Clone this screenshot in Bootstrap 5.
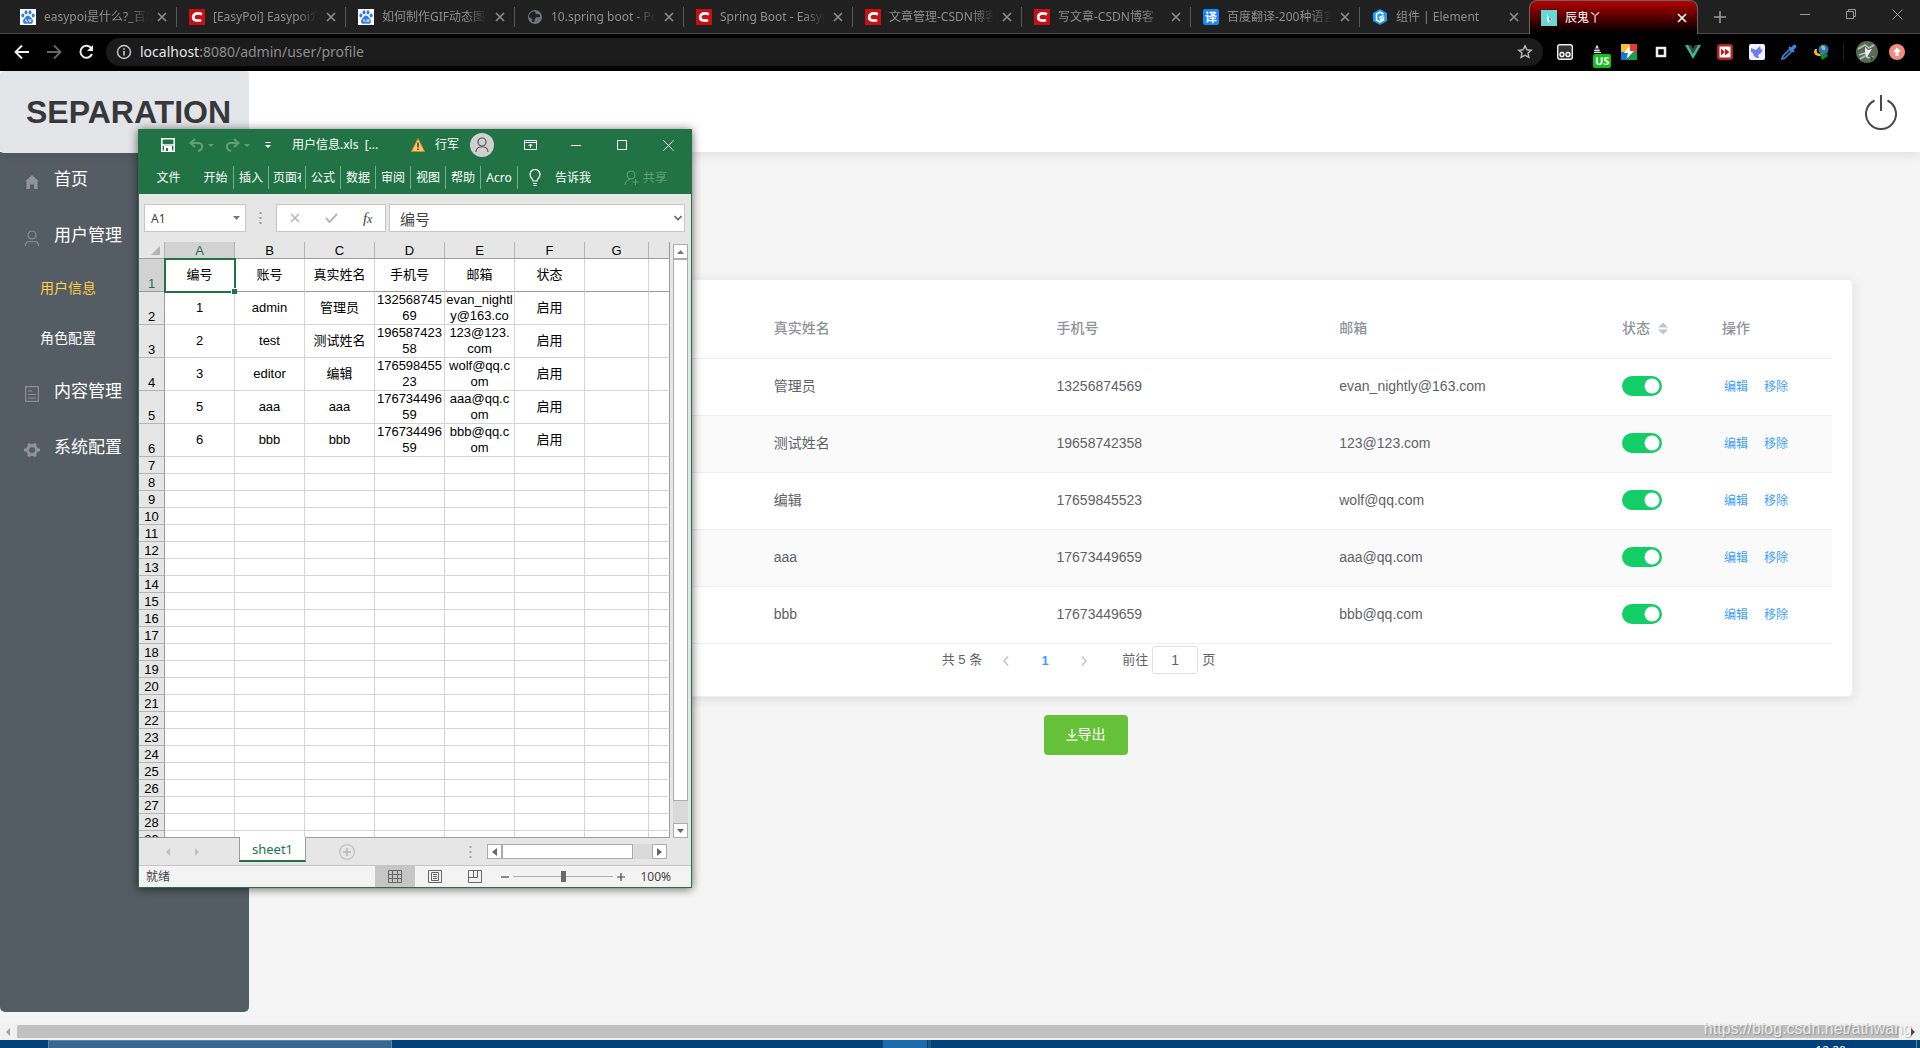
<!DOCTYPE html>
<html lang="zh-CN">
<head>
<meta charset="utf-8">
<meta name="viewport" content="width=device-width, initial-scale=1">
<title>辰鬼丫</title>
<link rel="stylesheet" href="https://cdn.jsdelivr.net/npm/bootstrap@5.3.0/dist/css/bootstrap.min.css">
<style>
:root{--ui:"Noto Sans","Noto Sans CJK SC",sans-serif;--page:"Liberation Sans","Noto Sans CJK SC",sans-serif;--xl:#217346}
body{font-family:var(--page);font-size:14px;background:#f5f5f5;overflow:hidden}
svg{display:block;flex:none}
button{background:none;border:0;padding:0;color:inherit}
/* browser chrome */
.tabstrip{height:34px;background:#202020;box-shadow:inset 0 -1px #4a4a4a;padding-left:8px;font:12px/18px var(--ui);color:#8e8e8e}
.btab{width:169px;height:34px;padding:0 10px 0 12px;gap:8px;position:relative}
.btab::after{content:"";position:absolute;right:0;top:7px;height:20px;border-right:1px solid #575757}
.btab.on{color:#fff;background:linear-gradient(#b40000,#000 95%);border:1px solid #666;border-bottom:0;border-radius:8px 8px 0 0;padding:0 10px 0 11px}
.btab.on::after,.btab.last::after{display:none}
.btab .ttl{flex:1;min-width:0;white-space:nowrap;overflow:hidden;-webkit-mask-image:linear-gradient(90deg,#000 80%,transparent);mask-image:linear-gradient(90deg,#000 80%,transparent)}
.btab.on .ttl{-webkit-mask-image:none;mask-image:none}
.winbtn{width:46px;height:28px}
.toolbar{height:37px;background:#000;padding:0 12px 2px 12px;color:#ddd}
.omni{height:28px;background:#1b1b1b;border-radius:14px;padding:0 10px;margin:0 14px 0 12px}
.url{font:14px/20px var(--ui);color:#8e8e8e}
.url b{font-weight:400;color:#e6e6e6}
.ext{gap:16px}
.usbadge{position:absolute;left:4px;top:10px;background:#12c21a;color:#fff;font:bold 11px/14px var(--ui);padding:0 2px;border-radius:2px}
/* admin page */
.top{height:81px;background:#fff;box-shadow:0 2px 12px rgba(0,0,0,.1);position:relative;z-index:2}
.brandbox{width:249px;height:82px;background:#e4e5e8;border-radius:4px;color:#37383c;font-size:32px;font-weight:700;line-height:82px;padding-left:26px;text-decoration:none}
.side{width:249px;background:#545c64;border-radius:0 0 5px 5px;margin-bottom:11px}
.side a{display:flex;align-items:center;text-decoration:none;color:#fff;height:56px;padding-left:24px;gap:14px;font-size:17px;line-height:24px}
.side a svg{margin-top:4px}
.side a.sub{height:50px;padding:0 0 2px 40px;font-size:14px}
.side a.cur{color:#ffd04b}
.work{padding:127px 67px 0 69px}
.panel{background:#fff;border:1px solid #ebeef5;border-radius:4px;box-shadow:0 2px 12px rgba(0,0,0,.1);padding:20px}
.users{table-layout:fixed;width:100%;color:#606266;line-height:23px}
.users th,.users td{border-bottom:1px solid #ebeef5;padding:0 10px;height:57px;vertical-align:middle}
.users th{height:58px;color:#909399;font-weight:500}
.users tbody tr:nth-child(even) td{background:#fafafa}
.users a{color:#409eff;font-size:12px;text-decoration:none;margin:0 16px 0 2px}
.users a+a{margin:0}
.users .form-check-input{width:40px;height:20px;margin:0;float:none;display:block;border:0;background-color:#13ce66;box-shadow:none;background-size:20px 20px}
.users .form-switch{padding:0;min-height:0}
.pager{height:32px;padding:2px 14px 0 0;gap:10px;font-size:13px;line-height:28px;color:#606266}
.pager .goto{gap:4px;margin-left:14px}
.pager input{width:46px;height:28px;border:1px solid #dcdfe6;border-radius:3px;text-align:center;color:#606266;font-size:14px;background:#fff}
.exp{width:84px;height:40px;margin-top:18px;border-radius:4px;background:#67c23a;color:#fff;font-size:14px}
/* scrollbar + taskbar */
.hbar{height:17px;background:#f1f1f1;padding:0 5px}
.hbar i{background:#c1c1c1;height:13px;margin:0 12px 0 6px}
.wmark{position:absolute;right:8px;bottom:8px;font-size:16px;line-height:22px;color:rgba(255,255,255,.75);text-shadow:1px 1px 1px rgba(0,0,0,.25)}
.taskbar{height:8px;background:#004279;padding-left:48px;overflow:hidden}
.task1{width:344px;background:#38688f;border:1px solid #5c86a8;border-bottom:0}
.task2{width:44px;background:#1a6bac;margin-left:491px}
.task3{width:3px;background:#16568a;margin-left:1px}
.clock{color:#fff;font:12px/16px var(--ui);margin:3px 70px 0 auto}
.peek{border-left:1px solid #5c86a8;width:4px}
/* spreadsheet window */
.xl{position:absolute;left:138px;top:129px;width:554px;height:759px;z-index:5;border:1px solid var(--xl);border-top:0;background:#e6e6e6;box-shadow:0 1px 9px rgba(0,0,0,.6);font:12px/18px var(--ui);color:#444}
.xlhead{background:var(--xl);color:#fff;height:65px}
.xltitle{height:32px;padding-left:22px}
.xlwin{width:46px}
.xlribbon{height:33px}
.xlribbon button{height:23px;border-right:1px solid #7aab8f;width:35px;white-space:nowrap;overflow:hidden;flex:none;padding:0}
.xlribbon button.plain{border:0}
.faded{opacity:.3}
.fbar{padding:10px 6px 0 5px;height:37px}
.fbox{background:#fff;border:1px solid #c6c6c6;height:28px}
.fbox input{border:0;background:none;outline:0;width:100%;height:26px;color:#444}
.gridwrap{margin-top:11px;height:596px;overflow:hidden;padding-right:3px}
.gridbox{flex:1;min-width:0;overflow:hidden;border-bottom:1px solid #9b9b9b}
.cells{table-layout:fixed;width:531px;border-collapse:separate;border-spacing:0;font:13px/16px var(--page);color:#000;text-align:center;background:#fff}
.cells th{background:#e6e6e6;font-weight:400;border-right:1px solid #9b9b9b;border-bottom:1px solid #b4b4b4;padding:0}
.cells thead th{height:17px;border-bottom:1px solid #9b9b9b;border-right-color:#b4b4b4;line-height:15px}
.cells tbody th{height:17px;vertical-align:bottom;line-height:14px}
.cells td{border-right:1px solid #d4d4d4;border-bottom:1px solid #d4d4d4;padding:0;vertical-align:middle}
.cells tr.tall>*{height:33px}
.cells tr.frz>*{border-bottom-color:#9b9b9b}
.cells tr>*:last-child{border-right-color:#9b9b9b}
.cells thead th.hot,.cells th.hot{background:#d2d2d2;color:var(--xl)}
.cells td.pick{outline:2px solid var(--xl);outline-offset:-1px;position:relative}
.cells td.pick::after{content:"";position:absolute;right:-3px;bottom:-3px;width:5px;height:5px;background:var(--xl);border:1px solid #fff;box-sizing:content-box;border-right:0;border-bottom:0}
.vbar{width:15px;background:#dadada;margin:2px 0 0 3px}
.sbtn{width:15px;height:15px;background:#fff;border:1px solid #ababab;display:flex;align-items:center;justify-content:center;flex:none}
.thumb{background:#fff;border:1px solid #ababab}
.sheets{height:28px;border-bottom:1px solid #c6c6c6}
.sheettab{width:67px;height:25px;margin-top:-1px;background:#fff;border:1px solid #9b9b9b;border-top:0;border-bottom:2px solid var(--xl);color:var(--xl);font-size:13px;align-self:flex-start}
.hscroll{width:180px;background:#dadada;height:15px}
.status{height:21px;background:#f3f3f3}
.vw{width:40px;height:21px;display:flex;align-items:center;justify-content:center}
.vw.on{background:#c6c6c6}
.fx{font:italic 15px/20px "Liberation Serif",serif}
.fx span{font-size:12px}
.zoomr{appearance:none;-webkit-appearance:none;width:100px;height:12px;background:linear-gradient(#b0b0b0,#b0b0b0) center/100% 1px no-repeat;margin:0 4px}
.zoomr::-webkit-slider-thumb{-webkit-appearance:none;width:5px;height:11px;background:#6a6a6a;border:0}
</style>
</head>
<body class="d-flex flex-column vh-100 position-relative">
<svg width="0" height="0" class="position-absolute" aria-hidden="true">
<symbol id="x" viewBox="0 0 10 10"><path d="M1 1l8 8M9 1l-8 8" stroke="currentColor" stroke-width="1.6" fill="none"/></symbol>
<symbol id="paw" viewBox="0 0 16 16"><path fill="#fff" d="M0 0h16v16H0z"/><g fill="#2f7bea"><ellipse cx="6" cy="3.4" rx="1.5" ry="2.1"/><ellipse cx="10" cy="3.4" rx="1.5" ry="2.1"/><ellipse cx="2.8" cy="6.6" rx="1.5" ry="2"/><ellipse cx="13.2" cy="6.6" rx="1.5" ry="2"/><path d="M8 6.5c-1.800 0-2.300 1.500-3.500 2.700-2.400 2.300-1.700 5.600.9 5.600 1 0 1.600-.3 2.600-.3s1.600.3 2.600.3c2.600 0 3.300-3.300.9-5.600C10.300 8 9.800 6.500 8 6.500z"/></g><path d="M6 10v2.500h1.500M9 10v2.500h1.800V10" stroke="#fff" fill="none" stroke-width=".9"/></symbol>
<symbol id="cs" viewBox="0 0 16 16"><path fill="#c90f14" d="M0 0h16v16H0z"/><path d="M13 5.200C8.500 3.500 4.500 4.500 4.200 8c-.2 3.500 3.600 4.200 8 3.200" fill="none" stroke="#fff" stroke-width="2.700"/></symbol>
</svg>

<nav class="tabstrip d-flex flex-shrink-0">
 <div class="btab d-flex align-items-center"><svg width="16" height="16"><use href="#paw"/></svg><span class="ttl">easypoi是什么?_百度</span><button aria-label="关闭"><svg width="10" height="10"><use href="#x"/></svg></button></div>
 <div class="btab d-flex align-items-center"><svg width="16" height="16"><use href="#cs"/></svg><span class="ttl">[EasyPoi] Easypoi介绍</span><button aria-label="关闭"><svg width="10" height="10"><use href="#x"/></svg></button></div>
 <div class="btab d-flex align-items-center"><svg width="16" height="16"><use href="#paw"/></svg><span class="ttl">如何制作GIF动态图片</span><button aria-label="关闭"><svg width="10" height="10"><use href="#x"/></svg></button></div>
 <div class="btab d-flex align-items-center"><svg width="16" height="16" viewBox="0 0 16 16"><circle cx="8" cy="8" r="7" fill="#70757a"/><path d="M7 2.500c2 0 1 2 2.500 2.500s3-.5 3.500 1.500-1.500 2-3 1.800C8 8.200 9 10 7.500 10.500 9 12 6 14 5 12.500 6 10 4 9 2 8c0-3 2-5.500 5-5.500z" fill="#202020"/></svg><span class="ttl">10.spring boot - Poi</span><button aria-label="关闭"><svg width="10" height="10"><use href="#x"/></svg></button></div>
 <div class="btab d-flex align-items-center"><svg width="16" height="16"><use href="#cs"/></svg><span class="ttl">Spring Boot - Easypoi</span><button aria-label="关闭"><svg width="10" height="10"><use href="#x"/></svg></button></div>
 <div class="btab d-flex align-items-center"><svg width="16" height="16"><use href="#cs"/></svg><span class="ttl">文章管理-CSDN博客</span><button aria-label="关闭"><svg width="10" height="10"><use href="#x"/></svg></button></div>
 <div class="btab d-flex align-items-center"><svg width="16" height="16"><use href="#cs"/></svg><span class="ttl">写文章-CSDN博客</span><button aria-label="关闭"><svg width="10" height="10"><use href="#x"/></svg></button></div>
 <div class="btab d-flex align-items-center"><svg width="16" height="16" viewBox="0 0 16 16"><rect width="16" height="16" rx="2" fill="#1b86f9"/><text x="2" y="12.500" font-size="12" font-weight="700" fill="#fff">译</text></svg><span class="ttl">百度翻译-200种语言</span><button aria-label="关闭"><svg width="10" height="10"><use href="#x"/></svg></button></div>
 <div class="btab last d-flex align-items-center"><svg width="16" height="16" viewBox="0 0 16 16"><path d="M8 0l7 4v8l-7 4-7-4V4z" fill="#1b9bf5"/><path d="M11.500 5L8 3 4.500 5v6L8 13l3.500-2V9L8 11M11.500 6.500L7 9" stroke="#fff" stroke-width="1.500" fill="none"/></svg><span class="ttl">组件 | Element</span><button aria-label="关闭"><svg width="10" height="10"><use href="#x"/></svg></button></div>
 <div class="btab on d-flex align-items-center"><svg width="16" height="16" viewBox="0 0 16 16"><path fill="#66d9d4" d="M0 0h16v16H0z"/><path d="M6 4l2 4 3 1-3 4-2-2z" fill="#e8f4f4"/><path d="M8 8l2 1-1 2z" fill="#333"/></svg><span class="ttl">辰鬼丫</span><button aria-label="关闭"><svg width="10" height="10"><use href="#x"/></svg></button></div>
 <button class="px-3" aria-label="新标签页"><svg width="12" height="12" viewBox="0 0 12 12"><path d="M6 0v12M0 6h12" stroke="#999" stroke-width="1.600"/></svg></button>
 <div class="d-flex ms-auto">
  <button class="winbtn d-flex align-items-center justify-content-center" aria-label="最小化"><svg width="10" height="10"><path d="M0 5.500h10" stroke="#999"/></svg></button>
  <button class="winbtn d-flex align-items-center justify-content-center" aria-label="还原"><svg width="10" height="10"><path d="M.5 2.500h7v7h-7zM2.500 2V.5h7v7H8" stroke="#999" fill="none"/></svg></button>
  <button class="winbtn d-flex align-items-center justify-content-center" aria-label="关闭窗口"><svg width="11" height="11"><path d="M.5.5l10 10M10.500.5l-10 10" stroke="#999"/></svg></button>
 </div>
</nav>

<div class="toolbar d-flex align-items-center flex-shrink-0">
 <div class="d-flex gap-3">
  <button aria-label="后退"><svg width="18" height="20" viewBox="0 0 18 20"><path d="M17 10H4M10 3.500L3.500 10l6.500 6.500" fill="none" stroke="#eee" stroke-width="1.900"/></svg></button>
  <button aria-label="前进"><svg width="16" height="20" viewBox="0 0 16 20"><path d="M1 10h13M8 3.500l6.500 6.500L8 16.500" fill="none" stroke="#666" stroke-width="1.900"/></svg></button>
  <button aria-label="刷新"><svg width="16" height="20" viewBox="0 0 16 20"><path d="M13.500 6.500A6 6 0 1 0 14 12" fill="none" stroke="#eee" stroke-width="2"/><path d="M15 3v6H9z" fill="#eee"/></svg></button>
 </div>
 <div class="omni d-flex align-items-center flex-fill">
  <svg width="16" height="16" viewBox="0 0 16 16"><circle cx="8" cy="8" r="6.500" fill="none" stroke="#ccc" stroke-width="1.400"/><path d="M8 7v4.500M8 4.300v1.500" stroke="#ccc" stroke-width="1.600"/></svg>
  <a class="url text-decoration-none ms-2 me-auto" href="#"><b>localhost</b>:8080/admin/user/profile</a>
  <button aria-label="收藏"><svg width="16" height="16" viewBox="0 0 16 16"><path d="M8 1.800l1.900 4 4.300.4-3.200 2.900.9 4.300L8 11.200l-3.900 2.200.9-4.300L1.800 6.200l4.300-.4z" fill="none" stroke="#bbb" stroke-width="1.400"/></svg></button>
 </div>
 <div class="ext d-flex align-items-center">
  <svg width="16" height="16" viewBox="0 0 16 16"><rect x=".7" y=".7" width="14.600" height="14.600" rx="2" fill="#333" stroke="#eee" stroke-width="1.400"/><circle cx="5" cy="10.500" r="2" fill="none" stroke="#fff" stroke-width="1.300"/><circle cx="11" cy="10.500" r="2" fill="none" stroke="#fff" stroke-width="1.300"/></svg>
  <div class="position-relative"><svg width="16" height="16" viewBox="0 0 16 16"><path d="M8 1.500L5.500 7h5zM5 8.500h7" fill="#ddd" stroke="#ddd"/><path d="M6 5h4" stroke="#000"/></svg><span class="usbadge">US</span></div>
  <svg width="16" height="16" viewBox="0 0 16 16"><path fill="#fbc02d" d="M0 0h9L7 8H0z"/><path fill="#e53935" d="M9 0h7v8H7z"/><path fill="#1976d2" d="M0 8h8l-2 8H0z"/><path fill="#1b9e4b" d="M8 8h8v8H6z"/><path d="M9 1L3 9h4l-1.500 6L13 7H9z" fill="#fff"/></svg>
  <svg width="16" height="16" viewBox="0 0 16 16"><path d="M4 4h8v8H4z" fill="none" stroke="#eee" stroke-width="2.500"/></svg>
  <svg width="16" height="16" viewBox="0 0 16 16"><path d="M0 1h3.200L8 9.500 12.800 1H16L8 15z" fill="#41b883"/><path d="M3.200 1H6l2 3.500L10 1h2.800L8 9.500z" fill="#35495e"/></svg>
  <svg width="16" height="16" viewBox="0 0 16 16"><rect width="16" height="16" rx="3" fill="#b3211c"/><rect x="2.500" y="2.500" width="11" height="11" fill="#fff"/><path d="M4 4.500L8 8l-4 3.500zM8 4.500L12.500 8 8 11.500z" fill="#b3211c"/></svg>
  <svg width="16" height="16" viewBox="0 0 16 16"><rect width="16" height="16" rx="2" fill="#f3f0ff"/><path d="M2 4l5 2 4-4 1 4 2-1-2 4-3 2 1 3C7 14 4 12 4 9L2 8z" fill="#6b7cf5"/></svg>
  <svg width="16" height="16" viewBox="0 0 16 16"><path d="M9.500 4.500L2 12l-1 3 3-1 7.500-7.500" fill="none" stroke="#3f86dc" stroke-width="1.600"/><path d="M8 3l5 5" stroke="#3f86dc" stroke-width="2"/><path d="M10.500 5.500l3-3" stroke="#3f86dc" stroke-width="3.600" stroke-linecap="round"/></svg>
  <svg width="16" height="16" viewBox="0 0 16 16"><circle cx="10.500" cy="5.500" r="5" fill="#2f6fd0"/><path d="M8 2c3-1 5 1 4 4-2 1-3 0-4-4z" fill="#9bd24f"/><path d="M2 5c-3 4 1 8 7 7l1-3C6 11 3 9 4 5z" fill="#f3b51b"/><path d="M7 10l6-1 2 3-6 4z" fill="#118c2b"/></svg>
 </div>
 <div class="vr align-self-center" style="height:18px;margin:0 12px 0 14px;color:#888"></div>
 <svg width="22" height="22" viewBox="0 0 22 22"><circle cx="11" cy="11" r="11" fill="#556b53"/><path d="M2 8l7-4 4 3 5-3M3 14l6-2 3 5 6-1M4 18l5-3" stroke="#b9c4b4" stroke-width="1.500" fill="none"/><path d="M9 6l3 3 4-1-3 5-3 4-1-6z" fill="#e6ecf2"/><path d="M14 15l4 2-3 3z" fill="#2f4a35"/></svg>
 <svg class="ms-2" width="22" height="16" viewBox="-3 0 22 16"><circle cx="8" cy="8" r="8" fill="#f28b82"/><path d="M8 3.500l4 4.500H9.500v4h-3V8H4z" fill="#fff"/></svg>
</div>

<header class="top d-flex flex-shrink-0">
 <a class="brandbox" href="#">SEPARATION</a>
 <button class="ms-auto d-flex align-items-center" style="margin-right:23px" aria-label="退出"><svg width="32" height="38" viewBox="0 0 32 38"><path d="M9.500 7.500a15 15 0 1 0 13 0M16 2v16" fill="none" stroke="#4a4a4a" stroke-width="2"/></svg></button>
</header>

<div class="d-flex flex-fill" style="min-height:0">
 <nav class="side flex-shrink-0">
  <a href="#"><svg width="16" height="16" viewBox="0 0 16 16"><path d="M8 1L1 7.500h1.500V15H6v-4.500h4V15h3.500V7.500H15z" fill="#909399"/></svg>首页</a>
  <a href="#"><svg width="16" height="16" viewBox="0 0 16 16"><circle cx="8" cy="5" r="4" fill="none" stroke="#8b8f96" stroke-width="1.200"/><path d="M1.500 16c0-3 1.500-4.500 3.500-4.500h6c2 0 3.500 1.500 3.500 4.500" fill="none" stroke="#8b8f96" stroke-width="1.200"/></svg>用户管理</a>
  <a href="#" class="sub cur">用户信息</a>
  <a href="#" class="sub">角色配置</a>
  <a href="#"><svg width="16" height="16" viewBox="0 0 16 16"><path d="M1.600.6h12.800v14.800H1.600zM4 5h4M4 8.500h8M4 12h8" fill="none" stroke="#8b8f96" stroke-width="1.200"/></svg>内容管理</a>
  <a href="#"><svg width="16" height="16" viewBox="0 0 16 16"><circle cx="8" cy="8" r="4.500" fill="none" stroke="#909399" stroke-width="3"/><path d="M4.500 1.500l1.500 2.500M10 12l1.500 2.500M11.500 1.500L10 4M6 12l-1.500 2.500M0 8h3M13 8h3" stroke="#909399" stroke-width="3"/></svg>系统配置</a>
 </nav>
 <main class="work flex-fill">
  <section class="panel">
   <table class="users">
    <colgroup><col style="width:142px"><col><col><col><col><col style="width:100px"><col style="width:120px"></colgroup>
    <thead><tr><th></th><th></th><th>真实姓名</th><th>手机号</th><th>邮箱</th><th><span class="d-flex align-items-center gap-2">状态<svg width="10" height="13" viewBox="0 0 10 13"><path d="M0 5.500L5 .5l5 5zM0 7.500h10l-5 5z" fill="#c0c4cc"/></svg></span></th><th>操作</th></tr></thead>
    <tbody>
     <tr><td></td><td></td><td>管理员</td><td>13256874569</td><td>evan_nightly@163.com</td><td><div class="form-check form-switch"><input class="form-check-input" type="checkbox" role="switch" aria-label="状态" checked></div></td><td><a href="#">编辑</a><a href="#">移除</a></td></tr>
     <tr><td></td><td></td><td>测试姓名</td><td>19658742358</td><td>123@123.com</td><td><div class="form-check form-switch"><input class="form-check-input" type="checkbox" role="switch" aria-label="状态" checked></div></td><td><a href="#">编辑</a><a href="#">移除</a></td></tr>
     <tr><td></td><td></td><td>编辑</td><td>17659845523</td><td>wolf@qq.com</td><td><div class="form-check form-switch"><input class="form-check-input" type="checkbox" role="switch" aria-label="状态" checked></div></td><td><a href="#">编辑</a><a href="#">移除</a></td></tr>
     <tr><td></td><td></td><td>aaa</td><td>17673449659</td><td>aaa@qq.com</td><td><div class="form-check form-switch"><input class="form-check-input" type="checkbox" role="switch" aria-label="状态" checked></div></td><td><a href="#">编辑</a><a href="#">移除</a></td></tr>
     <tr><td></td><td></td><td>bbb</td><td>17673449659</td><td>bbb@qq.com</td><td><div class="form-check form-switch"><input class="form-check-input" type="checkbox" role="switch" aria-label="状态" checked></div></td><td><a href="#">编辑</a><a href="#">移除</a></td></tr>
    </tbody>
   </table>
   <div class="pager d-flex justify-content-center">
    <span>共 5 条</span>
    <button class="px-2" aria-label="上一页"><svg width="12" height="12" viewBox="0 0 12 12"><path d="M8 1.500L4 6l4 4.500" fill="none" stroke="#c0c4cc" stroke-width="1.500"/></svg></button>
    <button class="px-2" style="color:#409eff;width:30px"><b>1</b></button>
    <button class="px-2" aria-label="下一页"><svg width="12" height="12" viewBox="0 0 12 12"><path d="M4 1.500L8 6l-4 4.500" fill="none" stroke="#c0c4cc" stroke-width="1.500"/></svg></button>
    <div class="goto d-flex"><label for="pg">前往</label><input id="pg" value="1"><span>页</span></div>
   </div>
  </section>
  <div class="text-center"><button class="exp"><span class="d-flex align-items-center justify-content-center"><svg width="12" height="12" viewBox="0 0 12 12"><path d="M6 0v8M2.500 5L6 8.500 9.500 5M.5 11.200h11" fill="none" stroke="#fff" stroke-width="1.200"/></svg>导出</span></button></div>
 </main>
</div>

<div class="hbar d-flex align-items-center flex-shrink-0">
 <svg width="6" height="8"><path d="M5 0v8L1 4z" fill="#a3a3a3"/></svg><i class="flex-fill"></i><svg width="4" height="8"><path d="M0 0v8l4-4z" fill="#505050"/></svg>
</div>
<div class="taskbar d-flex flex-shrink-0"><span class="task1"></span><span class="task2"></span><span class="task3"></span><span class="clock">12:20</span><span class="peek"></span></div>
<div class="wmark">https://blog.csdn.net/athwang</div>

<section class="xl">
 <div class="xlhead">
  <div class="xltitle d-flex align-items-center">
   <button aria-label="保存"><svg width="14" height="14"><path d="M.8.8h12.400v12.400H.8zM1 7h12" fill="none" stroke="#fff" stroke-width="1.600"/><path d="M3 8h8v5H3z" fill="#fff"/><path d="M5 10h2v3H5z" fill="#217346"/></svg></button>
   <button class="faded d-flex align-items-center gap-1" style="margin-left:14px" aria-label="撤消"><svg width="15" height="14"><path d="M6 1L1.500 5 6 9M2 5h7c6 0 5 7 0 8" fill="none" stroke="#fff" stroke-width="2"/></svg><svg width="6" height="3"><path d="M0 0h6L3 3z" fill="#fff"/></svg></button>
   <button class="faded d-flex align-items-center gap-1" style="margin-left:11px" aria-label="恢复"><svg width="15" height="14"><path d="M9 1l4.500 4L9 9M13 5H6C0 5 1 12 6 13" fill="none" stroke="#fff" stroke-width="2"/></svg><svg width="6" height="3"><path d="M0 0h6L3 3z" fill="#fff"/></svg></button>
   <button style="margin-left:15px" aria-label="自定义"><svg width="6" height="7"><path d="M0 .5h6" stroke="#fff"/><path d="M0 3h6L3 6z" fill="#fff"/></svg></button>
   <span style="margin-left:21px;width:119px">用户信息.xls&nbsp; [...</span>
   <svg width="14" height="14" viewBox="0 0 14 14"><path d="M7 .5L13.500 13.500H.5z" fill="#f7c667" stroke="#d9822b"/><path d="M7 4.500v5M7 10.500v1.500" stroke="#333" stroke-width="1.400"/></svg>
   <span style="margin:0 11px 0 10px">行军</span>
   <svg width="24" height="24" viewBox="0 0 24 24"><circle cx="12" cy="12" r="12" fill="#d0d0d0"/><circle cx="12" cy="9" r="4" fill="none" stroke="#555" stroke-width="1.200"/><path d="M6 19c0-7 12-7 12 0" fill="none" stroke="#555" stroke-width="1.200"/></svg>
   <div class="d-flex ms-auto">
    <button class="xlwin d-flex justify-content-center" aria-label="功能区"><svg width="13" height="10"><path d="M.5.5h12v9H.5zM.5 2.500h12M6.500 8V4M4.500 6l2-2 2 2" fill="none" stroke="#fff"/></svg></button>
    <button class="xlwin d-flex justify-content-center" aria-label="最小化"><svg width="10" height="10"><path d="M0 5.500h10" stroke="#fff"/></svg></button>
    <button class="xlwin d-flex justify-content-center" aria-label="最大化"><svg width="10" height="10"><path d="M.5.5h9v9h-9z" fill="none" stroke="#fff"/></svg></button>
    <button class="xlwin d-flex justify-content-center" aria-label="关闭"><svg width="11" height="11"><path d="M.5.5l10 10M10.500.5l-10 10" stroke="#fff"/></svg></button>
   </div>
  </div>
  <div class="xlribbon d-flex align-items-center">
   <button class="plain" style="width:59px">文件</button>
   <button style="width:36px">开始</button><button>插入</button><button style="width:37px"><span class="d-block overflow-hidden text-start mx-1">页面布局</span></button><button>公式</button><button>数据</button><button>审阅</button><button>视图</button><button>帮助</button><button style="width:37px">Acro</button>
   <svg style="margin-left:11px" width="12" height="18" viewBox="0 0 12 18"><path d="M4 12c0-2-3-3-3-6.500a5 5 0 0 1 10 0C11 9 8 10 8 12zM4 14.500h4M4.500 16.500h3" fill="none" stroke="#fff" stroke-width="1.200"/></svg>
   <button class="plain" style="width:64px">告诉我</button>
   <button class="plain faded d-flex align-items-center gap-1 ms-auto" style="width:auto;margin-right:24px"><svg width="15" height="16"><circle cx="7" cy="5" r="4" fill="none" stroke="#fff"/><path d="M1 15c0-3 2-5.500 5-5.500M11.500 9v6M8.500 12h6" fill="none" stroke="#fff"/></svg>共享</button>
  </div>
 </div>
 <div class="fbar d-flex">
  <div class="fbox d-flex align-items-center pe-1 ps-1" style="width:102px"><input aria-label="名称框" value="A1"><svg width="8" height="5"><path d="M0 0h7L3.500 4z" fill="#777"/></svg></div>
  <svg style="margin:8px 14px 0 13px" width="3" height="12"><path d="M1.500 0v2M1.500 5v2M1.500 10v2" stroke="#999" stroke-width="2"/></svg>
  <div class="fbox d-flex align-items-center justify-content-around" style="width:110px"><svg width="10" height="10"><path d="M1 1l8 8M9 1l-8 8" stroke="#b8b8b8" stroke-width="1.600"/></svg><svg width="13" height="10"><path d="M1 5l3.500 4L12 1" fill="none" stroke="#b8b8b8" stroke-width="2"/></svg><i class="fx">f<span>x</span></i></div>
  <div class="fbox d-flex align-items-center flex-fill" style="margin-left:3px;padding:0 2px 0 8px"><input aria-label="编辑栏" value="编号" style="font-size:15px"><svg width="8" height="6"><path d="M.5 1L4 4.500 7.500 1" fill="none" stroke="#666" stroke-width="1.600"/></svg></div>
 </div>
 <div class="gridwrap d-flex">
  <div class="gridbox">
   <table class="cells">
    <colgroup><col style="width:26px"><col style="width:70px"><col style="width:70px"><col style="width:70px"><col style="width:70px"><col style="width:70px"><col style="width:70px"><col style="width:64px"><col style="width:21px"></colgroup>
    <thead><tr><th><svg class="ms-auto me-1" width="9" height="9"><path d="M9 0v9H0z" fill="#b4b4b4"/></svg></th><th class="hot">A</th><th>B</th><th>C</th><th>D</th><th>E</th><th>F</th><th>G</th><th></th></tr></thead>
    <tbody id="rows">
     <tr class="tall frz"><th class="hot">1</th><td class="pick">编号</td><td>账号</td><td>真实姓名</td><td>手机号</td><td>邮箱</td><td>状态</td><td></td><td></td></tr>
     <tr class="tall"><th>2</th><td>1</td><td>admin</td><td>管理员</td><td>132568745<br>69</td><td>evan_nightl<br>y@163.co</td><td>启用</td><td></td><td></td></tr>
     <tr class="tall"><th>3</th><td>2</td><td>test</td><td>测试姓名</td><td>196587423<br>58</td><td>123@123.<br>com</td><td>启用</td><td></td><td></td></tr>
     <tr class="tall"><th>4</th><td>3</td><td>editor</td><td>编辑</td><td>176598455<br>23</td><td>wolf@qq.c<br>om</td><td>启用</td><td></td><td></td></tr>
     <tr class="tall"><th>5</th><td>5</td><td>aaa</td><td>aaa</td><td>176734496<br>59</td><td>aaa@qq.c<br>om</td><td>启用</td><td></td><td></td></tr>
     <tr class="tall"><th>6</th><td>6</td><td>bbb</td><td>bbb</td><td>176734496<br>59</td><td>bbb@qq.c<br>om</td><td>启用</td><td></td><td></td></tr>
    </tbody>
   </table>
  </div>
  <div class="vbar d-flex flex-column"><button class="sbtn" aria-label="向上"><svg width="7" height="4"><path d="M0 4h7L3.500 0z" fill="#777"/></svg></button><div class="thumb flex-fill" style="margin-bottom:22px"></div><button class="sbtn" aria-label="向下"><svg width="7" height="4"><path d="M0 0h7L3.500 4z" fill="#666"/></svg></button></div>
 </div>
 <div class="sheets d-flex align-items-center">
  <svg style="margin-left:27px" width="5" height="8"><path d="M4 0v8L0 4z" fill="#c0c0c0"/></svg>
  <svg style="margin-left:24px" width="5" height="8"><path d="M0 0v8l4-4z" fill="#c0c0c0"/></svg>
  <button class="sheettab" style="margin-left:39px">sheet1</button>
  <button style="margin-left:33px" aria-label="新工作表"><svg width="16" height="16"><circle cx="8" cy="8" r="7.400" fill="none" stroke="#c0c0c0" stroke-width="1.200"/><path d="M8 4v8M4 8h8" stroke="#c0c0c0" stroke-width="2"/></svg></button>
  <svg class="ms-auto" style="margin-right:15px" width="3" height="12"><path d="M1.500 0v2M1.500 5v2M1.500 10v2" stroke="#aaa" stroke-width="2"/></svg>
  <div class="hscroll d-flex" style="margin-right:24px"><button class="sbtn" aria-label="向左"><svg width="5" height="8"><path d="M5 0v8L0 4z" fill="#666"/></svg></button><div class="thumb flex-fill" style="margin-right:19px"></div><button class="sbtn" aria-label="向右"><svg width="5" height="8"><path d="M0 0v8l5-4z" fill="#666"/></svg></button></div>
 </div>
 <div class="status d-flex align-items-center">
  <span class="me-auto" style="margin-left:7px">就绪</span>
  <button class="vw on" aria-label="普通"><svg width="14" height="13"><path d="M.5.5h13v12H.5zM.5 4.500h13M.5 8.500h13M4.500.5v12M9.500.5v12" fill="none" stroke="#666"/></svg></button>
  <button class="vw" aria-label="页面布局"><svg width="14" height="13"><path d="M.5.5h13v12H.5zM3.500 2.500h7v8h-7zM5 4.500h4M5 6.500h4M5 8.500h4" fill="none" stroke="#666"/></svg></button>
  <button class="vw" aria-label="分页预览"><svg width="14" height="13"><path d="M.5.5h13v12H.5zM.5 7.500h9v-7M5.500.5v7" fill="none" stroke="#666"/></svg></button>
  <svg width="8" height="8" style="margin-left:6px"><path d="M0 4h8" stroke="#444" stroke-width="1.200"/></svg>
  <input class="zoomr" type="range" min="0" max="100" value="50" aria-label="缩放">
  <svg width="8" height="8"><path d="M0 4h8M4 0v8" stroke="#444" stroke-width="1.200"/></svg>
  <span style="margin:0 20px 0 15px">100%</span>
 </div>
</section>

<script>
// blank rows below the exported data
const rows = document.getElementById('rows');
for (let n = 7; n <= 29; n++) {
  rows.insertAdjacentHTML('beforeend', '<tr><th>' + n + '</th>' + '<td></td>'.repeat(8) + '</tr>');
}
</script>
<script src="https://cdn.jsdelivr.net/npm/bootstrap@5.3.0/dist/js/bootstrap.bundle.min.js"></script>
</body>
</html>
